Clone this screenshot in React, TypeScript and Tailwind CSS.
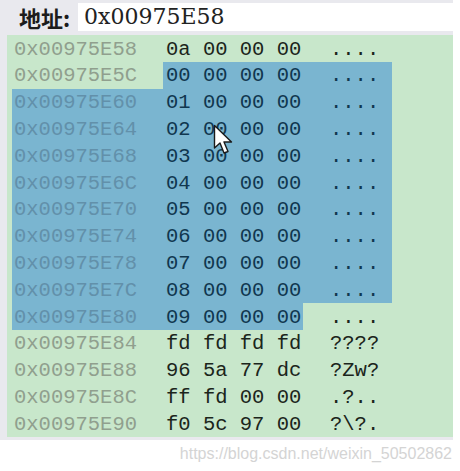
const rows = [
  { addr: "0x00975E58", hex: "0a 00 00 00", ascii: "....", sel: [false, false, false] },
  { addr: "0x00975E5C", hex: "00 00 00 00", ascii: "....", sel: [false, true, true] },
  { addr: "0x00975E60", hex: "01 00 00 00", ascii: "....", sel: [true, true, true] },
  { addr: "0x00975E64", hex: "02 00 00 00", ascii: "....", sel: [true, true, true] },
  { addr: "0x00975E68", hex: "03 00 00 00", ascii: "....", sel: [true, true, true] },
  { addr: "0x00975E6C", hex: "04 00 00 00", ascii: "....", sel: [true, true, true] },
  { addr: "0x00975E70", hex: "05 00 00 00", ascii: "....", sel: [true, true, true] },
  { addr: "0x00975E74", hex: "06 00 00 00", ascii: "....", sel: [true, true, true] },
  { addr: "0x00975E78", hex: "07 00 00 00", ascii: "....", sel: [true, true, true] },
  { addr: "0x00975E7C", hex: "08 00 00 00", ascii: "....", sel: [true, true, true] },
  { addr: "0x00975E80", hex: "09 00 00 00", ascii: "....", sel: [true, true, false] },
  { addr: "0x00975E84", hex: "fd fd fd fd", ascii: "????", sel: [false, false, false] },
  { addr: "0x00975E88", hex: "96 5a 77 dc", ascii: "?Zw?", sel: [false, false, false] },
  { addr: "0x00975E8C", hex: "ff fd 00 00", ascii: ".?..", sel: [false, false, false] },
  { addr: "0x00975E90", hex: "f0 5c 97 00", ascii: "?\\?.", sel: [false, false, false] },
];

function Cursor() {
  return (
    <svg
      className="absolute left-[213px] top-[124px]"
      width="22"
      height="32"
      viewBox="0 0 22 32"
    >
      <path
        d="M1.5 1.5 L1.5 24 L7 19 L11 29 L15 27.5 L11 18 L18.5 18 Z"
        fill="#ffffff"
        stroke="#1a1a1a"
        strokeWidth="1.4"
        strokeLinejoin="round"
      />
    </svg>
  );
}

export default function App() {
  return (
    <div className="relative w-[460px] h-[471px] bg-white overflow-hidden">
      <div className="w-[453px] bg-[#e9e9ee] pl-[7px] pb-[3px]">
        <div className="flex h-[35px] pt-[3px] pb-[4px]">
          <div
            className="w-[71px] flex items-center pl-[12px] text-[22px] font-bold text-[#1c1c1c] leading-none"
            style={{ fontFamily: '"Noto Sans CJK SC", sans-serif' }}
          >
            地址:
          </div>
          <div
            className="flex-1 bg-white flex items-center pl-[6px] text-[22px] text-[#222] leading-none"
            style={{ fontFamily: '"DejaVu Serif", serif' }}
          >
            0x00975E58
          </div>
        </div>
        <div
          className="bg-[#c8e7cb] text-[20.5px] leading-none"
          style={{ fontFamily: '"Liberation Mono", "Courier New", monospace' }}
        >
          {rows.map((r) => (
            <div key={r.addr} className="flex h-[26.8px]">
              <div className="w-[5px]" />
              <div
                className={
                  "w-[151px] flex items-center pl-[2px] pt-[3px] " +
                  (r.sel[0] ? "bg-[#7ab5d0] text-[#6290aa]" : "text-[#909f8e]")
                }
              >
                {r.addr}
              </div>
              <div
                className={
                  "w-[140px] flex items-center pl-[3px] pt-[3px] whitespace-pre " +
                  (r.sel[1] ? "bg-[#7ab5d0] text-[#10374f]" : "text-[#1b251b]")
                }
              >
                {r.hex}
              </div>
              <div
                className={
                  "w-[89px] flex items-center pl-[27px] pt-[3px] whitespace-pre " +
                  (r.sel[2] ? "bg-[#7ab5d0] text-[#10374f]" : "text-[#1b251b]")
                }
              >
                {r.ascii}
              </div>
            </div>
          ))}
        </div>
      </div>
      <div
        className="flex justify-end pr-[8px] pt-[2px] text-[16px] text-[#d4d4d4]"
        style={{ fontFamily: '"Liberation Sans", Arial, sans-serif' }}
      >
        https://blog.csdn.net/weixin_50502862
      </div>
      <Cursor />
    </div>
  );
}
